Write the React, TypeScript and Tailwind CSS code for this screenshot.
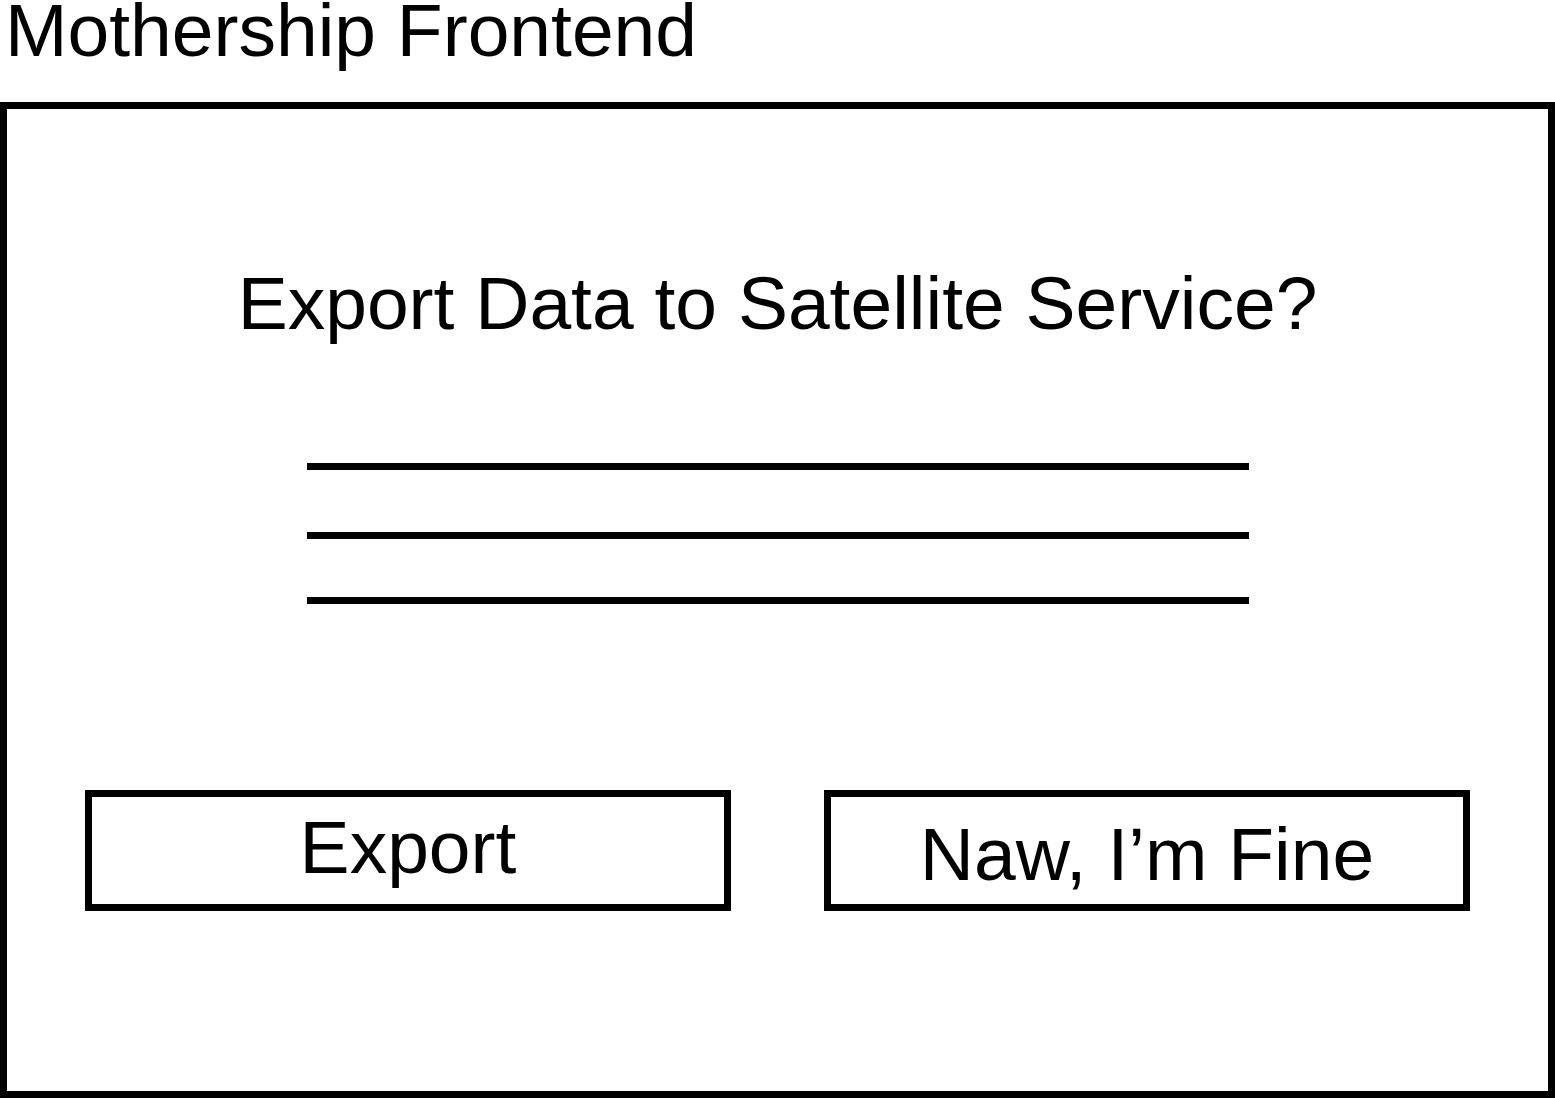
const lines = [
  { key: "l1", className: "mt-[122px]" },
  { key: "l2", className: "mt-[62px]" },
  { key: "l3", className: "mt-[58px]" },
];

export default function App() {
  return (
    <div className="flex h-[1098px] w-[1555px] flex-col bg-white font-['Liberation_Sans',Arial,sans-serif] text-black">
      <h1 className="h-[61px] pl-[5px] text-[75px] leading-[61px] whitespace-nowrap">Mothership Frontend</h1>

      <div className="mt-[41px] flex flex-1 flex-col border-[7px] border-black">
        <h2 className="mt-[157px] text-center text-[75px] leading-[75px] whitespace-nowrap">
          Export Data to Satellite Service?
        </h2>

        {lines.map((line) => (
          <div key={line.key} className={`mx-auto h-[7px] w-[942px] bg-black ${line.className}`} />
        ))}

        <div className="mt-[186px] flex gap-[93px] px-[78px]">
          <button className="flex h-[121px] w-[646px] items-center justify-center border-[7px] border-black pb-[7px] text-[75px] leading-[75px]">
            Export
          </button>
          <button className="flex h-[121px] w-[646px] items-center justify-center border-[7px] border-black pt-[7px] text-[75px] leading-[75px]">
            Naw, I’m Fine
          </button>
        </div>
      </div>
    </div>
  );
}
